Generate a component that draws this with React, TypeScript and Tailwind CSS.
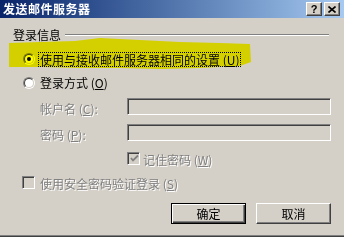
import React from 'react';

function Radio({ checked = false }: { checked?: boolean }) {
  return (
    <div className="h-[12px] w-[12px] shrink-0 rounded-full border border-t-[#808080] border-l-[#808080] border-b-white border-r-white">
      <div className="flex h-full w-full items-center justify-center rounded-full border border-t-[#404040] border-l-[#404040] border-b-[#d4d0c8] border-r-[#d4d0c8] bg-white">
        {checked ? <div className="h-[4px] w-[4px] rounded-full bg-black" /> : null}
      </div>
    </div>
  );
}

function Checkbox({ checked = false }: { checked?: boolean }) {
  return (
    <div className="flex h-[13px] w-[13px] shrink-0 items-center justify-center border border-t-[#808080] border-l-[#808080] border-b-white border-r-white bg-[#d4d0c8] shadow-[inset_1px_1px_0_#404040]">
      {checked ? (
        <svg width="9" height="9" viewBox="0 0 9 9" className="ml-[1px] mt-[1px]">
          <path d="M1 4 L3 6.5 L8 1.5" fill="none" stroke="#808080" strokeWidth="1.8" />
        </svg>
      ) : null}
    </div>
  );
}

function DisabledText({ children }: { children: React.ReactNode }) {
  return (
    <span className="whitespace-nowrap text-[12px] leading-none text-[#808080] [text-shadow:1px_1px_0_#ffffff]">
      {children}
    </span>
  );
}

function DisabledInput() {
  return (
    <div className="h-full flex-1 border border-t-[#808080] border-l-[#808080] border-b-white border-r-white bg-[#d4d0c8] shadow-[inset_1px_1px_0_#404040]" />
  );
}

function TitleButton({ children }: { children: React.ReactNode }) {
  return (
    <div className="flex h-[14px] w-[16px] items-center justify-center border border-t-white border-l-white border-r-[#404040] border-b-[#404040] bg-[#d4d0c8] shadow-[inset_-1px_-1px_0_#808080]">
      {children}
    </div>
  );
}

export default function App() {
  return (
    <div className="relative flex h-[237px] w-[344px] flex-col overflow-hidden border-b border-b-[#404040] bg-[#d4d0c8] font-['Noto_Sans_CJK_SC',sans-serif] text-black shadow-[inset_0_-1px_0_#808080]">
      <div className="flex h-[18px] shrink-0 items-center bg-gradient-to-r from-[#0a246a] to-[#a6caf0] pl-[3px] pr-[4px]">
        <span className="text-[12px] font-bold leading-none tracking-[0.5px] text-white">发送邮件服务器</span>
        <div className="ml-auto flex gap-[2px]">
          <TitleButton>
            <span className="font-['Liberation_Sans',sans-serif] text-[11px] font-bold leading-none">?</span>
          </TitleButton>
          <TitleButton>
            <svg width="8" height="7" viewBox="0 0 8 7">
              <path d="M0.5 0.5 L7.5 6.5 M7.5 0.5 L0.5 6.5" stroke="#000" strokeWidth="1.6" />
            </svg>
          </TitleButton>
        </div>
      </div>

      <div className="mt-[10px] flex h-[13px] items-center pl-[13px] pr-[15px]">
        <span className="text-[12px] leading-none">登录信息</span>
        <div className="ml-[4px] h-[2px] flex-1 border-t border-t-[#808080] border-b border-b-white" />
      </div>

      <div className="mt-[10px] flex h-[16px] items-center pl-[23px]">
        <Radio checked />
        <span className="ml-[3px] whitespace-nowrap border border-dotted border-black px-[1px] text-[12px] leading-[13px]">
          使用与接收邮件服务器相同的设置 (<span className="underline">U</span>)
        </span>
      </div>

      <div className="mt-[8px] flex h-[16px] items-center pl-[23px]">
        <Radio />
        <span className="ml-[5px] whitespace-nowrap text-[12px] leading-none">
          登录方式 (<span className="underline">O</span>)
        </span>
      </div>

      <div className="mt-[7px] flex h-[17px] items-center pl-[40px] pr-[13px]">
        <div className="w-[87px]">
          <DisabledText>帐户名 (<span className="underline">C</span>):</DisabledText>
        </div>
        <DisabledInput />
      </div>

      <div className="mt-[9px] flex h-[17px] items-center pl-[40px] pr-[13px]">
        <div className="w-[87px]">
          <DisabledText>密码 (<span className="underline">P</span>):</DisabledText>
        </div>
        <DisabledInput />
      </div>

      <div className="mt-[9px] flex h-[16px] items-center pl-[127px]">
        <Checkbox checked />
        <span className="ml-[3px]">
          <DisabledText>记住密码 (<span className="underline">W</span>)</DisabledText>
        </span>
      </div>

      <div className="mt-[8px] flex h-[16px] items-center pl-[22px]">
        <Checkbox />
        <span className="ml-[5px]">
          <DisabledText>使用安全密码验证登录 (<span className="underline">S</span>)</DisabledText>
        </span>
      </div>

      <div className="mt-[13px] flex h-[21px] justify-end gap-[10px] pr-[13px]">
        <button
          type="button"
          className="w-[75px] border border-black bg-[#d4d0c8] text-[12px] leading-none shadow-[inset_1px_1px_0_#ffffff,inset_-1px_-1px_0_#404040,inset_-2px_-2px_0_#808080]"
        >
          确定
        </button>
        <button
          type="button"
          className="w-[75px] border border-t-white border-l-white border-r-[#404040] border-b-[#404040] bg-[#d4d0c8] text-[12px] leading-none shadow-[inset_-1px_-1px_0_#808080]"
        >
          取消
        </button>
      </div>

      <svg
        className="pointer-events-none absolute left-0 top-0 mix-blend-multiply"
        width="344"
        height="237"
        viewBox="0 0 344 237"
      >
        <polygon
          points="9,43 40,42 75,41 100,38 140,40 180,42 220,43 250,44 251,62 240,66 200,68 160,69 120,68 80,68 40,67 9,67"
          fill="#ffff00"
        />
      </svg>
    </div>
  );
}
